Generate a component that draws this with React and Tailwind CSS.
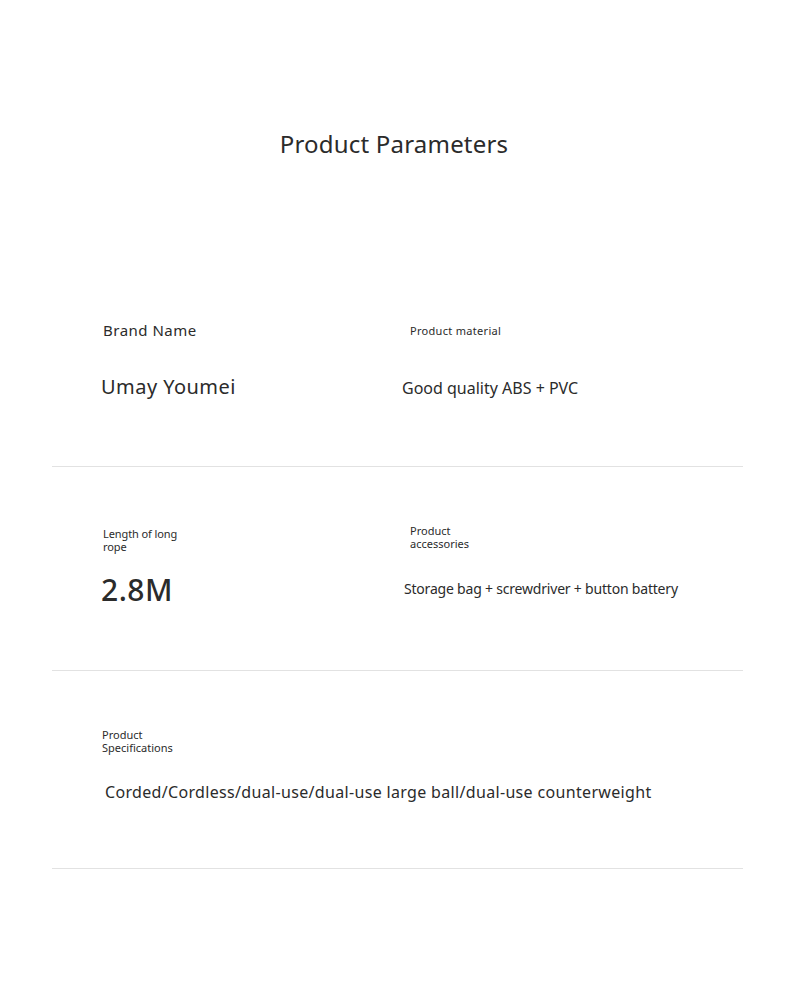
import React from "react";

const rows = [
  {
    height: "h-[147px]",
    left: {
      label: "Brand Name",
      labelClass: "text-[15px] leading-[20px] tracking-[0.5px] mt-0 ml-[51px] w-[200px]",
      value: "Umay Youmei",
      valueClass: "text-[20px] leading-[28px] tracking-[0.45px] mt-[33px] ml-[49px]",
    },
    right: {
      label: "Product material",
      labelClass: "text-[11px] leading-[14px] tracking-[0.3px] mt-[4px] ml-[6px] w-[200px]",
      value: "Good quality ABS + PVC",
      valueClass: "text-[16px] leading-[22px] mt-[39px] ml-[-2px]",
    },
  },
  {
    height: "h-[204px]",
    left: {
      label: "Length of long rope",
      labelClass: "text-[11px] leading-[13px] tracking-[-0.1px] mt-[60px] ml-[51px] w-[80px]",
      value: "2.8M",
      valueClass: "text-[30px] leading-[36px] tracking-[0.5px] mt-[19px] ml-[49px] font-medium",
    },
    right: {
      label: "Product accessories",
      labelClass: "text-[11px] leading-[13px] mt-[57px] ml-[6px] w-[70px]",
      value: "Storage bag + screwdriver + button battery",
      valueClass: "text-[14px] leading-[20px] tracking-[-0.2px] mt-[29px] ml-[0px]",
    },
  },
];

const Cell = ({ cell, width }) => (
  <div className={`flex flex-col ${width}`}>
    <p className={cell.labelClass}>{cell.label}</p>
    <p className={cell.valueClass}>{cell.value}</p>
  </div>
);

export default function App() {
  return (
    <div className="w-[790px] h-[998px] bg-white text-[#2b2b2b] font-['Noto_Sans',sans-serif]">
      <h1 className="pt-[128px] text-center text-[24px] leading-[32px] tracking-[0.2px] pr-[2px]">
        Product Parameters
      </h1>

      <div className="mt-[160px] ml-[52px] mr-[47px]">
        {rows.map((row, i) => (
          <div key={i} className={`flex items-start border-b border-[#e2e2e2] ${row.height}`}>
            <Cell cell={row.left} width="w-[352px]" />
            <Cell cell={row.right} width="flex-1" />
          </div>
        ))}

        {/* last row spans both columns */}
        <div className="flex flex-col border-b border-[#e2e2e2] h-[198px]">
          <p className="text-[11px] leading-[13px] mt-[57px] ml-[50px] w-[80px]">
            Product Specifications
          </p>
          <p className="text-[16px] leading-[22px] tracking-[0.33px] mt-[27px] ml-[53px]">
            Corded/Cordless/dual-use/dual-use large ball/dual-use counterweight
          </p>
        </div>
      </div>
    </div>
  );
}
